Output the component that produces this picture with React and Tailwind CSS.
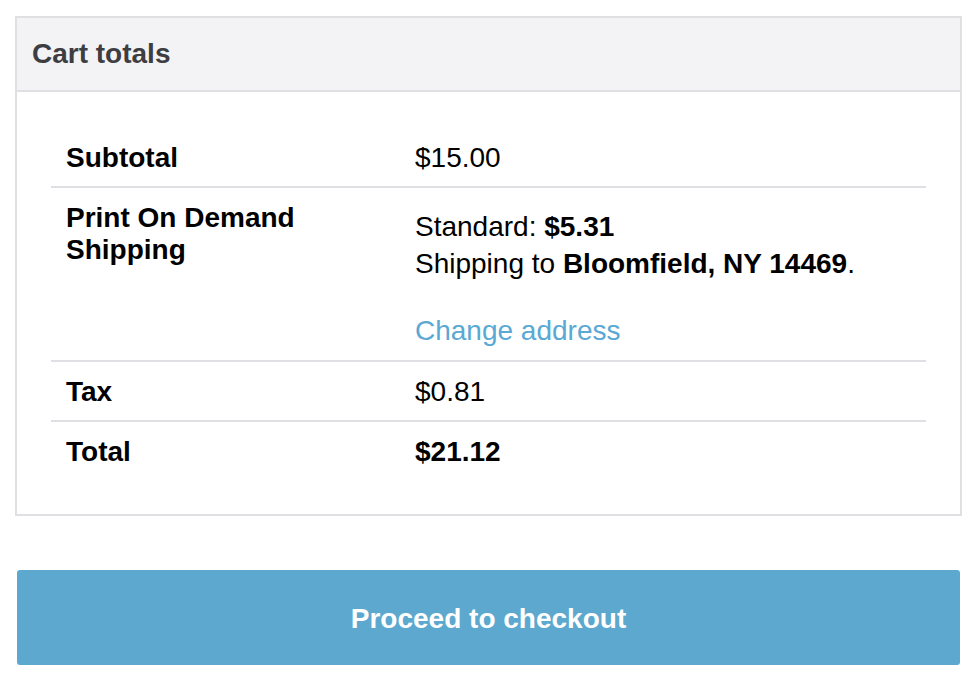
export default function App() {
  const font = { fontFamily: '"Liberation Sans", Arial, Helvetica, sans-serif' };
  return (
    <div className="min-h-[680px] w-[974px] bg-white pt-4" style={font}>
      <div className="ml-[15px] w-[947px] border-2 border-[#e0e0e4]">
        <div className="border-b-2 border-[#e0e0e4] bg-[#f3f3f5] px-[15px] py-[20px]">
          <h2 className="text-[28px] font-bold leading-[32px] text-[#3d3d42]">Cart totals</h2>
        </div>
        <div className="px-[34px] pt-[34px] pb-[31px] text-[28px] text-black">
          <div className="grid grid-cols-[349px_1fr] border-b-2 border-[#e0e0e4]">
            <div className="px-[15px] pt-[16px] pb-[12px] font-bold leading-[32px]">Subtotal</div>
            <div className="px-[15px] pt-[16px] pb-[12px] leading-[32px]">$15.00</div>
          </div>
          <div className="grid grid-cols-[349px_1fr] border-b-2 border-[#e0e0e4]">
            <div className="px-[15px] py-[14px] font-bold leading-[32px]">Print On Demand Shipping</div>
            <div className="px-[15px] pt-[20px] pb-[11px] leading-[37px]">
              <div>
                Standard: <span className="font-bold">$5.31</span>
              </div>
              <div>
                Shipping to <span className="font-bold">Bloomfield, NY 14469</span>.
              </div>
              <div className="mt-[30px]">
                <a href="#" className="text-[#5aa9d4]">Change address</a>
              </div>
            </div>
          </div>
          <div className="grid grid-cols-[349px_1fr] border-b-2 border-[#e0e0e4]">
            <div className="px-[15px] pt-[14px] pb-[12px] font-bold leading-[32px]">Tax</div>
            <div className="px-[15px] pt-[14px] pb-[12px] leading-[32px]">$0.81</div>
          </div>
          <div className="grid grid-cols-[349px_1fr]">
            <div className="px-[15px] pt-[14px] pb-[15px] font-bold leading-[32px]">Total</div>
            <div className="px-[15px] pt-[14px] pb-[15px] font-bold leading-[32px]">$21.12</div>
          </div>
        </div>
      </div>
      <div className="ml-[17px] mt-[54px] w-[943px]">
        <button className="flex h-[95px] w-full items-center justify-center rounded-[3px] pt-[2px] bg-[#5da8cf] text-[28px] font-bold text-white">
          Proceed to checkout
        </button>
      </div>
    </div>
  );
}
